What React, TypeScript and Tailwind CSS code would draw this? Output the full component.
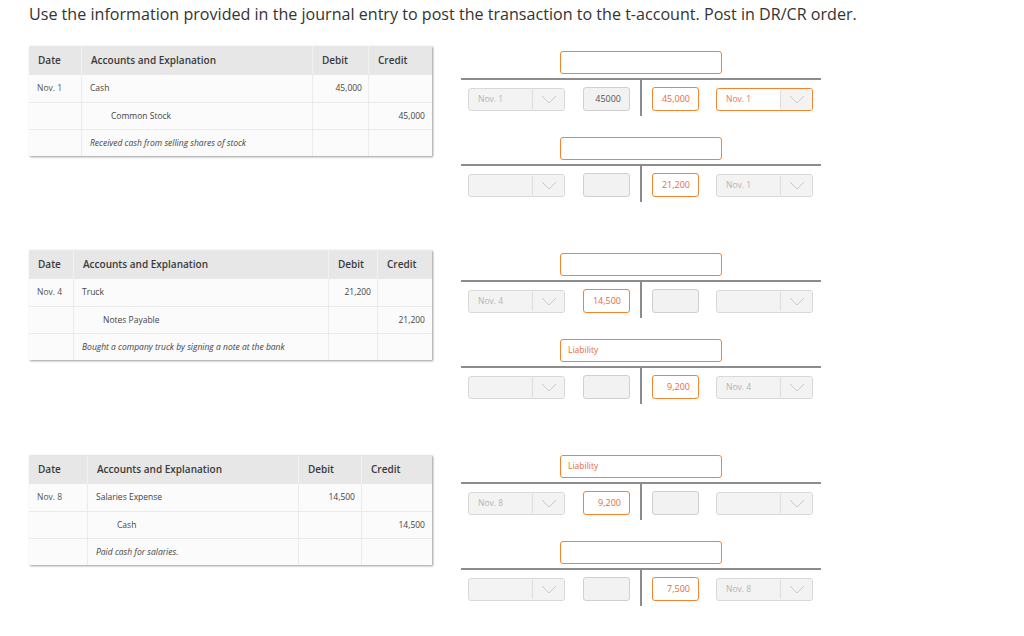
import React from "react";

type Field = { text: string; active: boolean };
type TAcc = { title: string; ls: Field; lb: Field; rb: Field; rs: Field };
type Section = {
  cols: string;
  date: string;
  dr: string;
  cr: string;
  amt: string;
  expl: string;
  tpt: string;
  h: string;
  t: TAcc[];
};

const off = (text = ""): Field => ({ text, active: false });
const on = (text = ""): Field => ({ text, active: true });

const sections: Section[] = [
  {
    cols: "grid-cols-[53px_231px_56px_63px]",
    date: "Nov. 1",
    dr: "Cash",
    cr: "Common Stock",
    amt: "45,000",
    expl: "Received cash from selling shares of stock",
    tpt: "pt-[5px]",
    h: "h-[204px]",
    t: [
      { title: "", ls: off("Nov. 1"), lb: off("45000"), rb: on("45,000"), rs: on("Nov. 1") },
      { title: "", ls: off(), lb: off(), rb: on("21,200"), rs: off("Nov. 1") },
    ],
  },
  {
    cols: "grid-cols-[45px_255px_49px_54px]",
    date: "Nov. 4",
    dr: "Truck",
    cr: "Notes Payable",
    amt: "21,200",
    expl: "Bought a company truck by signing a note at the bank",
    tpt: "pt-[3px]",
    h: "h-[205px]",
    t: [
      { title: "", ls: off("Nov. 4"), lb: on("14,500"), rb: off(), rs: off() },
      { title: "Liability", ls: off(), lb: off(), rb: on("9,200"), rs: off("Nov. 4") },
    ],
  },
  {
    cols: "grid-cols-[59px_211px_63px_70px]",
    date: "Nov. 8",
    dr: "Salaries Expense",
    cr: "Cash",
    amt: "14,500",
    expl: "Paid cash for salaries.",
    tpt: "pt-0",
    h: "h-[181px]",
    t: [
      { title: "Liability", ls: off("Nov. 8"), lb: on("9,200"), rb: off(), rs: off() },
      { title: "", ls: off(), lb: off(), rb: on("7,500"), rs: off("Nov. 8") },
    ],
  },
];

function Chevron() {
  return (
    <svg width="16" height="9" viewBox="0 0 16 9" fill="none">
      <polyline points="1,1 8,8 15,1" stroke="#c9c9c9" strokeWidth="1" />
    </svg>
  );
}

function Select({ f }: { f: Field }) {
  return (
    <div
      className={
        f.active
          ? "mt-[8px] flex h-[23px] w-[97px] items-stretch overflow-hidden rounded-[3px] border border-[#f0852f] bg-white"
          : "mt-[8px] flex h-[23px] w-[97px] items-stretch overflow-hidden rounded-[3px] border border-[#d8d8d8] bg-[#f3f3f3]"
      }
    >
      <div
        className={
          f.active
            ? "flex w-[63px] items-center pl-[9px] text-[8.5px] text-[#e9735e]"
            : "flex w-[63px] items-center pl-[9px] text-[8.5px] text-[#b3b3b3]"
        }
      >
        {f.text}
      </div>
      <div className="my-[1px] w-px bg-[#dcdcdc]" />
      <div className="flex flex-1 items-center justify-center bg-[#f3f3f3]">
        <Chevron />
      </div>
    </div>
  );
}

function Box({ f }: { f: Field }) {
  return (
    <div
      className={
        f.active
          ? "mt-[7px] flex h-[24px] w-[47px] items-center justify-end rounded-[3px] border border-[#f0852f] bg-white pr-[8px] text-[9px] text-[#ea6b36]"
          : "mt-[7px] flex h-[24px] w-[47px] items-center justify-end rounded-[3px] border border-[#cfcfcf] bg-[#f2f2f2] pr-[8px] text-[9px] text-[#555555]"
      }
    >
      {f.text}
    </div>
  );
}

function TAccount({ a }: { a: TAcc }) {
  return (
    <div className="w-[360px]">
      <div className="flex justify-center">
        <div className="flex h-[23px] w-[162px] items-center rounded-[3px] border border-[#f0852f] bg-white pl-[7px] text-[8.5px] text-[#ea6b36]">
          {a.title}
        </div>
      </div>
      <div className="mt-[4px] h-[2px] bg-[#8c8c8c]" />
      <div className="flex items-start">
        <div className="flex w-[179px] items-start gap-[18px] pl-[7px]">
          <Select f={a.ls} />
          <Box f={a.lb} />
        </div>
        <div className="h-[36px] w-[2px] bg-[#8c8c8c]" />
        <div className="flex w-[179px] items-start gap-[17px] pl-[10px]">
          <Box f={a.rb} />
          <Select f={a.rs} />
        </div>
      </div>
    </div>
  );
}

function Journal({ s }: { s: Section }) {
  const row = "grid h-[27px] border-t border-[#ebebeb] " + s.cols;
  const cell = "flex items-center border-r border-[#ebebeb]";
  return (
    <div className="w-[403px] bg-[#fbfbfb] text-[#444444] shadow-[1px_1px_2px_rgba(0,0,0,0.4)]">
      <div className={"grid h-[29px] bg-[#e7e7e7] text-[10px] font-semibold text-[#3a3a3a] " + s.cols}>
        <div className="flex items-center border-r border-[#f1f1f1] pl-[9px]">Date</div>
        <div className="flex items-center border-r border-[#f1f1f1] pl-[9px]">Accounts and Explanation</div>
        <div className="flex items-center border-r border-[#f1f1f1] pl-[9px]">Debit</div>
        <div className="flex items-center pl-[9px]">Credit</div>
      </div>
      <div className={"grid h-[27px] text-[8.5px] " + s.cols}>
        <div className={cell + " pl-[8px] text-[#555555]"}>{s.date}</div>
        <div className={cell + " pl-[8px]"}>{s.dr}</div>
        <div className={cell + " justify-end pr-[6px]"}>{s.amt}</div>
        <div className="flex items-center" />
      </div>
      <div className={row + " text-[8.5px]"}>
        <div className={cell} />
        <div className={cell + " pl-[29px]"}>{s.cr}</div>
        <div className={cell} />
        <div className="flex items-center justify-end pr-[7px]">{s.amt}</div>
      </div>
      <div className={row + " text-[8.5px] italic"}>
        <div className={cell} />
        <div className={cell + " pl-[8px]"}>{s.expl}</div>
        <div className={cell} />
        <div className="flex items-center" />
      </div>
    </div>
  );
}

export default function App() {
  return (
    <div className="h-[636px] w-[1024px] overflow-hidden bg-white font-['Open_Sans',sans-serif]">
      <div className="h-[46px] pl-[29px] pt-[3px] text-[16.1px] leading-[22px] text-[#333333]">
        Use the information provided in the journal entry to post the transaction to the t-account. Post in DR/CR order.
      </div>
      {sections.map((s, i) => (
        <div key={i} className={"flex items-start " + s.h}>
          <div className="ml-[29px]">
            <Journal s={s} />
          </div>
          <div className={"ml-[29px] flex flex-col gap-[21px] " + s.tpt}>
            {s.t.map((a, j) => (
              <TAccount key={j} a={a} />
            ))}
          </div>
        </div>
      ))}
    </div>
  );
}
